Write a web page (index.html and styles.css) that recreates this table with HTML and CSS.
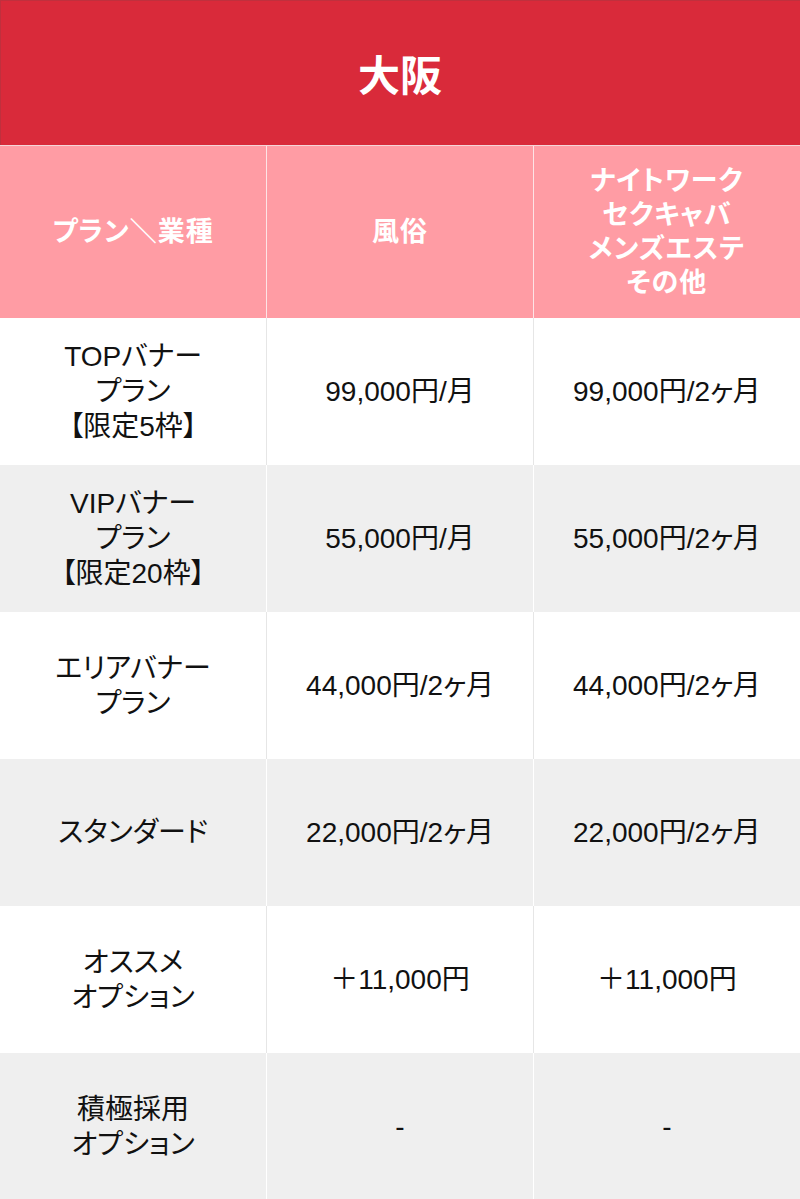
FILE: index.html
```
<!DOCTYPE html>
<html lang="ja">
<head>
<meta charset="utf-8">
<link rel="stylesheet" href="styles.css">
</head>
<body>
<table class="price">
  <thead>
    <tr class="title-row"><th colspan="3" class="title">大阪</th></tr>
    <tr class="head-row">
      <th>プラン＼業種</th>
      <th>風俗</th>
      <th>ナイトワーク<br>セクキャバ<br>メンズエステ<br>その他</th>
    </tr>
  </thead>
  <tbody>
    <tr class="row-white">
      <td>TOPバナー<br>プラン<br>【限定5枠】</td>
      <td>99,000円/月</td>
      <td>99,000円/2ヶ月</td>
    </tr>
    <tr class="row-gray">
      <td>VIPバナー<br>プラン<br>【限定20枠】</td>
      <td>55,000円/月</td>
      <td>55,000円/2ヶ月</td>
    </tr>
    <tr class="row-white">
      <td>エリアバナー<br>プラン</td>
      <td>44,000円/2ヶ月</td>
      <td>44,000円/2ヶ月</td>
    </tr>
    <tr class="row-gray">
      <td>スタンダード</td>
      <td>22,000円/2ヶ月</td>
      <td>22,000円/2ヶ月</td>
    </tr>
    <tr class="row-white">
      <td>オススメ<br>オプション</td>
      <td>＋11,000円</td>
      <td>＋11,000円</td>
    </tr>
    <tr class="row-gray">
      <td>積極採用<br>オプション</td>
      <td>-</td>
      <td>-</td>
    </tr>
  </tbody>
</table>
</body>
</html>
```
FILE: styles.css
```
html, body {
  margin: 0;
  padding: 0;
  background: #ffffff;
}
body {
  font-family: "Liberation Sans", "Noto Sans CJK JP", sans-serif;
  color: #111111;
  overflow: hidden;
}
.price {
  width: 800px;
  table-layout: fixed;
  border-collapse: collapse;
  border-spacing: 0;
}
.price th, .price td {
  padding: 0;
  text-align: center;
  vertical-align: middle;
}
.title-row .title {
  height: 145px;
  background: #d92a3a;
  color: #ffffff;
  font-size: 42px;
  font-weight: bold;
  border-bottom: 1px solid #f4d6d8;
  box-shadow: inset 1px 1px 0 #c0303d;
}
.head-row th {
  height: 172px;
  background: #ff9ca4;
  color: #ffffff;
  font-size: 27px;
  font-weight: bold;
  line-height: 34px;
  border-left: 1px solid #fde4e6;
  font-feature-settings: "palt";
  letter-spacing: 1px;
}
.head-row th:first-child {
  border-left: none;
}
.price td {
  height: 147px;
  font-size: 28px;
  line-height: 35px;
  border-left: 1px solid #e6e6e6;
  font-feature-settings: "palt";
}
.price td:first-child {
  border-left: none;
}
.row-white td {
  background: #ffffff;
}
.row-gray td {
  background: #efefef;
  border-left-color: #ffffff;
}
.row-gray td:first-child {
  border-left: none;
}
```
